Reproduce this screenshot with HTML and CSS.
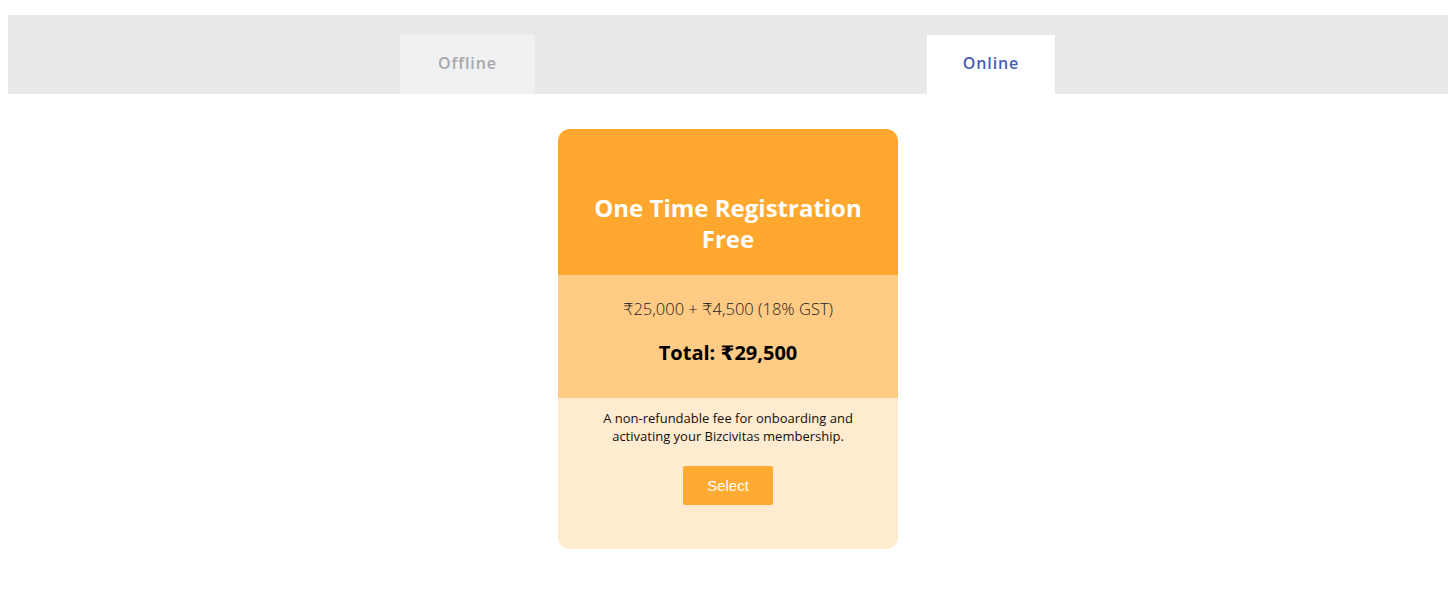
FILE: index.html
```html
<!DOCTYPE html>
<html lang="en">
<head>
<meta charset="utf-8">
<title>Plans</title>
<link rel="stylesheet" href="styles.css">
</head>
<body>
<div class="tabs">
  <div class="tab tab-offline">Offline</div>
  <div class="tab tab-online">Online</div>
</div>
<div class="content">
  <div class="card">
    <div class="card-head">
      <h3 class="card-title">One Time Registration<br>Free</h3>
    </div>
    <div class="card-price">
      <p class="price-line">₹25,000 + ₹4,500 (18% GST)</p>
      <p class="price-total">Total: ₹29,500</p>
    </div>
    <div class="card-body">
      <p class="card-desc">A non-refundable fee for onboarding and<br>activating your Bizcivitas membership.</p>
      <button class="btn-select">Select</button>
    </div>
  </div>
</div>
</body>
</html>
```

FILE: styles.css
```css
* { box-sizing: border-box; }
body {
  margin: 0;
  background: #fff;
  font-family: "Open Sans", "DejaVu Sans", sans-serif;
}
.tabs {
  margin: 15px 4px 0 8px;
  height: 79px;
  background: #e9e9e9;
  display: flex;
  align-items: flex-end;
  padding-left: 392px;
  gap: 392px;
}
.tab {
  height: 59px;
  padding-bottom: 3px;
  display: flex;
  align-items: center;
  justify-content: center;
  font-size: 16px;
  font-weight: 600;
  letter-spacing: 0.9px;
}
.tab-offline {
  width: 135px;
  background: #f0f1f3;
  color: #a8a8a8;
}
.tab-online {
  width: 128px;
  background: #fff;
  color: #4a5db3;
}
.content {
  margin: 35px 4px 0 8px;
  display: flex;
  justify-content: center;
}
.card {
  width: 340px;
  border-radius: 12px;
  overflow: hidden;
  text-align: center;
}
.card-head {
  background: #ffa72e;
  height: 146px;
  padding-top: 63px;
}
.card-title {
  margin: 0;
  color: #fff;
  font-size: 24px;
  font-weight: 700;
  line-height: 31px;
}
.card-price {
  background: #ffcb85;
  height: 123px;
  padding-top: 22px;
}
.price-line {
  margin: 0;
  font-size: 16.5px;
  font-weight: 300;
  color: #222;
  line-height: 24px;
}
.price-total {
  margin: 18px 0 0;
  font-size: 20px;
  font-weight: 700;
  color: #000;
  line-height: 28px;
}
.card-body {
  background: #ffebcf;
  height: 151px;
  padding-top: 11px;
}
.card-desc {
  margin: 0;
  font-size: 13px;
  line-height: 18px;
  color: #111;
}
.btn-select {
  margin-top: 21px;
  width: 90px;
  height: 39px;
  border: none;
  border-radius: 2px;
  background: #ffab33;
  color: #fff;
  font-family: "Liberation Sans", Arial, sans-serif;
  font-size: 15px;
}
```
